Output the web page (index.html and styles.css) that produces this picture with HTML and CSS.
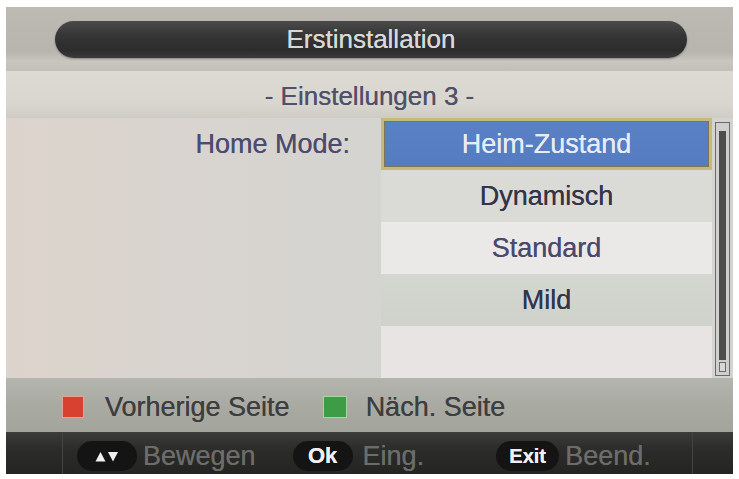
FILE: index.html
```html
<!DOCTYPE html>
<html>
<head>
<meta charset="utf-8">
<link rel="stylesheet" href="styles.css">
</head>
<body>
<div class="screen">
  <div class="header">
    <div class="pill-title">Erstinstallation</div>
  </div>
  <div class="subtitle">- Einstellungen 3 -</div>
  <div class="main">
    <div class="label-col"><div class="label">Home Mode:</div></div>
    <div class="list">
      <div class="row selected">Heim-Zustand</div>
      <div class="row r2">Dynamisch</div>
      <div class="row r3">Standard</div>
      <div class="row r4">Mild</div>
      <div class="row r5"></div>
    </div>
    <div class="scrollbar"><div class="thumb"></div><div class="end"></div></div>
  </div>
  <div class="legend">
    <span class="sq red"></span><span class="ltext">Vorherige Seite</span>
    <span class="sq green"></span><span class="ltext">Näch. Seite</span>
  </div>
  <div class="footer">
    <div class="sep"></div>
    <div class="keys">
      <span class="key k-arrows"><svg class="tri" width="24" height="11" viewBox="0 0 24 11"><path d="M0.5 10.5 L5.5 1 L10.5 10.5 Z" fill="#f0f0f0"/><path d="M13 1 L23 1 L18 10.5 Z" fill="#f0f0f0"/></svg></span><span class="ftext">Bewegen</span>
      <span class="key k-ok">Ok</span><span class="ftext">Eing.</span>
      <span class="key k-exit">Exit</span><span class="ftext">Beend.</span>
    </div>
    <div class="sep sep-r"></div>
  </div>
</div>
</body>
</html>
```

FILE: styles.css
```css
html, body {
  margin: 0;
  padding: 0;
  background: #ffffff;
}
body {
  font-family: "Liberation Sans", Arial, sans-serif;
  width: 739px;
  height: 479px;
  overflow: hidden;
}
.screen {
  margin: 7px 0 0 6px;
  width: 727px;
  height: 467px;
  display: flex;
  flex-direction: column;
  background: #d8d4ce;
  text-shadow: 0 0 0.6px currentColor;
}
.header {
  height: 64px;
  flex: none;
  display: flex;
  align-items: flex-start;
  padding-top: 14px;
  box-sizing: border-box;
  background: linear-gradient(#bdb9b3 0%, #b8b5af 70%, #c9c6c0 85%, #c2bfb9 100%);
}
.pill-title {
  margin-left: 49px;
  width: 632px;
  height: 37px;
  border-radius: 19px;
  background: linear-gradient(#4a4a4a 0%, #353535 40%, #2c2c2c 80%, #3c3c3c 100%);
  color: #d8d8d8;
  font-size: 26px;
  line-height: 37px;
  text-align: center;
  box-shadow: 0 1px 2px rgba(0,0,0,0.3);
}
.subtitle {
  height: 47px;
  flex: none;
  box-sizing: border-box;
  padding-top: 10px;
  text-align: center;
  font-size: 26px;
  line-height: 30px;
  color: #51506a;
  background: linear-gradient(#ddd9d3, #d9d5cf 70%, #cfccc6 100%);
}
.main {
  height: 260px;
  flex: none;
  display: flex;
  background: linear-gradient(90deg, #dcd4cc 0%, #d8d4cf 30%, #d2d4d2 60%, #d4d3cf 100%);
}
.label-col {
  width: 375px;
  flex: none;
  box-sizing: border-box;
  padding-right: 31px;
  padding-top: 10px;
}
.label {
  text-align: right;
  font-size: 27px;
  line-height: 32px;
  color: #4c4c6e;
}
.list {
  width: 331px;
  flex: none;
  display: flex;
  flex-direction: column;
}
.row {
  height: 52px;
  flex: none;
  box-sizing: border-box;
  text-align: center;
  font-size: 27px;
  line-height: 52px;
  color: #3c3c58;
}
.selected {
  border: 3px solid #c4ba7a;
  box-shadow: inset 0 0 0 1px #7a7656;
  background: linear-gradient(#5a80c6, #557bc0);
  color: #e6ecf6;
  line-height: 46px;
}
.r2 { background: #dadad6; color: #34344a; }
.r3 { background: #ebe8e8; color: #4a4a6c; }
.r4 { background: linear-gradient(#d4d6d0, #cfd1cb); color: #34344a; }
.r5 { background: #e8e4e4; }
.scrollbar {
  width: 15px;
  margin: 4px 0 2px 3px;
  flex: none;
  box-sizing: border-box;
  border: 1px solid #6a6a6a;
  background: #cfcfcf;
  display: flex;
  flex-direction: column;
  padding: 8px 3px 3px 3px;
}
.thumb {
  flex: 1;
  background: #4e4e4c;
}
.end {
  height: 8px;
  margin-top: 2px;
  border: 1px solid #6a6a6a;
  background: #d8d8d8;
}
.legend {
  height: 54px;
  flex: none;
  box-sizing: border-box;
  display: flex;
  align-items: center;
  padding-left: 56px;
  padding-top: 4px;
  background: linear-gradient(#b4b5ae 0%, #a9aba3 50%, #a3a59d 100%);
}
.sq {
  width: 22px;
  height: 22px;
  flex: none;
  box-sizing: border-box;
}
.red {
  background: #d8412f;
  border: 1px solid #e8a090;
}
.green {
  background: #3d9c45;
  border: 1px solid #a0d8a0;
  width: 24px;
  margin-left: 33px;
}
.ltext {
  margin-left: 21px;
  font-size: 27px;
  line-height: 30px;
  color: #3e3e40;
}
.green + .ltext { margin-left: 19px; }
.footer {
  height: 42px;
  flex: none;
  display: flex;
  align-items: stretch;
  background: linear-gradient(#3c3c3a 0%, #2c2c2a 40%, #242422 100%);
}
.sep {
  width: 56px;
  flex: none;
  border-right: 1px solid #444442;
}
.sep-r {
  width: 40px;
  border-right: none;
  border-left: 1px solid #444442;
  margin-left: auto;
}
.keys {
  display: flex;
  align-items: center;
  padding-left: 14px;
  padding-top: 6px;
}
.key {
  height: 30px;
  border-radius: 15px;
  background: #141414;
  color: #f0f0f0;
  display: flex;
  align-items: center;
  justify-content: center;
  flex: none;
}
.k-arrows { width: 60px; }
.tri { display: block; }
.k-ok { width: 60px; margin-left: 37px; font-size: 22px; font-weight: bold; }
.k-exit { width: 63px; margin-left: 72px; font-size: 20px; font-weight: bold; }
.ftext {
  margin-left: 6px;
  font-size: 27px;
  line-height: 30px;
  color: #6c6c6a;
}
.k-ok + .ftext { margin-left: 10px; }
```
